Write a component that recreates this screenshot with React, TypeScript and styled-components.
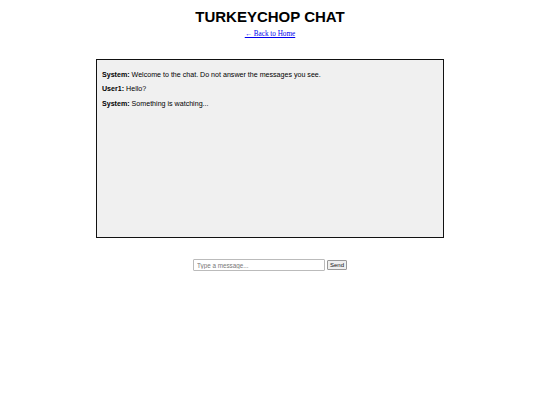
import React, { useState } from 'react';
import styled, { createGlobalStyle } from 'styled-components';

const GlobalStyle = createGlobalStyle`
  html, body {
    margin: 0;
    padding: 0;
    background: #fff;
  }
  body {
    font-family: 'Liberation Sans', Arial, sans-serif;
  }
`;

const Page = styled.div`
  display: flex;
  flex-direction: column;
  align-items: center;
  padding-top: 8px;
`;

const Title = styled.h1`
  margin: 0;
  font-size: 15px;
  line-height: 17px;
  font-weight: bold;
  color: #000;
`;

const HomeLink = styled.a`
  margin-top: 5px;
  font-family: 'Liberation Serif', 'Times New Roman', serif;
  font-size: 7.2px;
  line-height: 9px;
  color: #0000ee;
  text-decoration: underline;
`;

const ChatBox = styled.div`
  box-sizing: border-box;
  margin-top: 20px;
  width: 348px;
  height: 179px;
  padding: 4px 5px;
  border: 1px solid #111;
  background: #f0f0f0;
  overflow-y: auto;
`;

const Message = styled.p`
  margin: 6.5px 0;
  font-size: 7.1px;
  line-height: 8px;
  color: #000;

  strong {
    font-weight: bold;
  }
`;

const InputRow = styled.form`
  display: flex;
  align-items: center;
  gap: 2px;
  margin-top: 21px;
`;

const MessageInput = styled.input`
  box-sizing: border-box;
  width: 132px;
  height: 12px;
  padding: 0 3px;
  border: 1px solid #bbb;
  border-radius: 1px;
  font-family: 'Liberation Sans', Arial, sans-serif;
  font-size: 6.3px;
  outline: none;

  &::placeholder {
    color: #777;
  }
`;

const SendButton = styled.button`
  box-sizing: border-box;
  width: 20px;
  height: 10px;
  padding: 0;
  border: 1px solid #999;
  border-radius: 1px;
  background: #efefef;
  font-family: 'Liberation Sans', Arial, sans-serif;
  font-size: 6px;
  line-height: 8px;
  color: #111;
`;

const initialMessages = [
  { from: 'System', text: 'Welcome to the chat. Do not answer the messages you see.' },
  { from: 'User1', text: 'Hello?' },
  { from: 'System', text: 'Something is watching...' },
];

const App = () => {
  const [messages, setMessages] = useState(initialMessages);
  const [draft, setDraft] = useState('');

  const send = (e: React.FormEvent) => {
    e.preventDefault();
    if (!draft.trim()) return;
    setMessages([...messages, { from: 'You', text: draft }]);
    setDraft('');
  };

  return (
    <>
      <GlobalStyle />
      <Page>
        <Title>TURKEYCHOP CHAT</Title>
        <HomeLink href="#">← Back to Home</HomeLink>
        <ChatBox>
          {messages.map((m, i) => (
            <Message key={i}>
              <strong>{m.from}:</strong> {m.text}
            </Message>
          ))}
        </ChatBox>
        <InputRow onSubmit={send}>
          <MessageInput
            type="text"
            placeholder="Type a message..."
            value={draft}
            onChange={(e) => setDraft(e.target.value)}
          />
          <SendButton type="submit">Send</SendButton>
        </InputRow>
      </Page>
    </>
  );
};

export default App;
